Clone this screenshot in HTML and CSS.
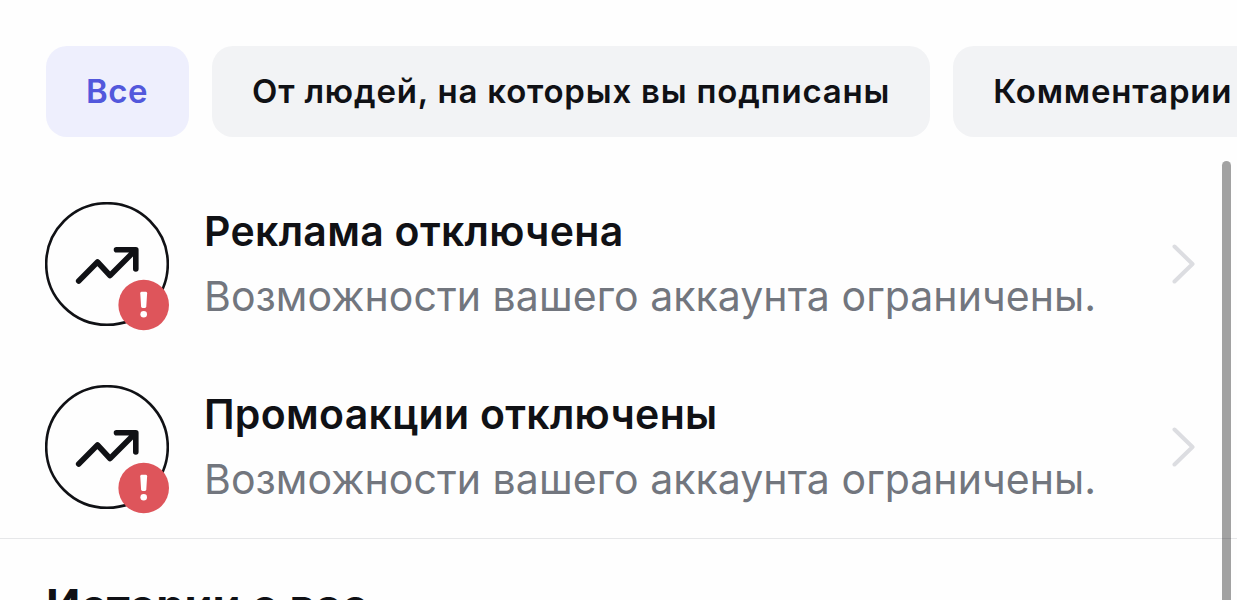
FILE: index.html
```html
<!DOCTYPE html>
<html lang="ru">
<head>
    <meta charset="UTF-8">
    <meta name="viewport" content="width=device-width, initial-scale=1.0">
    <title>Уведомления</title>
    <link rel="stylesheet" href="styles.css">
</head>
<body>
    <nav class="filters">
        <button class="chip active">Все</button>
        <button class="chip">От людей, на которых вы подписаны</button>
        <button class="chip">Комментарии</button>
    </nav>

    <main>
        <div class="alerts">
            <div class="alert">
                <svg class="alert-icon" viewBox="0 0 124 130">
                    <circle class="ring" cx="62" cy="62" r="60.8"/>
                    <path class="trend" d="M33.7 79 52.5 60 65 73.5 90.5 48M71.5 47.8H90.8V67"/>
                    <circle class="badge" cx="98.7" cy="103" r="25.3"/>
                    <path class="mark" d="M95.3 91.2Q95.3 89.8 96.7 89.8H100.7Q102.1 89.8 102.1 91.2L101.3 104.6Q101.2 106 99.9 106H97.5Q96.2 106 96.1 104.6Z"/>
                    <circle class="mark" cx="98.7" cy="112.3" r="3.3"/>
                </svg>
                <div class="alert-text">
                    <h3>Реклама отключена</h3>
                    <p>Возможности вашего аккаунта ограничены.</p>
                </div>
                <svg class="chevron" viewBox="0 0 24 42">
                    <path d="M3.5 3.5 21.5 21 3.5 38.5"/>
                </svg>
            </div>

            <div class="alert">
                <svg class="alert-icon" viewBox="0 0 124 130">
                    <circle class="ring" cx="62" cy="62" r="60.8"/>
                    <path class="trend" d="M33.7 79 52.5 60 65 73.5 90.5 48M71.5 47.8H90.8V67"/>
                    <circle class="badge" cx="98.7" cy="103" r="25.3"/>
                    <path class="mark" d="M95.3 91.2Q95.3 89.8 96.7 89.8H100.7Q102.1 89.8 102.1 91.2L101.3 104.6Q101.2 106 99.9 106H97.5Q96.2 106 96.1 104.6Z"/>
                    <circle class="mark" cx="98.7" cy="112.3" r="3.3"/>
                </svg>
                <div class="alert-text">
                    <h3>Промоакции отключены</h3>
                    <p>Возможности вашего аккаунта ограничены.</p>
                </div>
                <svg class="chevron" viewBox="0 0 24 42">
                    <path d="M3.5 3.5 21.5 21 3.5 38.5"/>
                </svg>
            </div>
        </div>

        <h2>Истории о вас</h2>
    </main>

    <div class="scrollbar"></div>
</body>
</html>
```

FILE: styles.css
```css
* {
    box-sizing: border-box;
}

body {
    margin: 0;
    height: 600px;
    overflow: hidden;
    background-color: #fefefe;
    color: #101115;
    font-family: Inter, "Liberation Sans", sans-serif;
}

.filters {
    display: flex;
    gap: 23px;
    padding: 46px 0 0 46px;
}

.chip {
    flex: none;
    height: 91px;
    padding: 0 40px 2px;
    border: none;
    border-radius: 21px;
    background-color: #f2f3f5;
    color: #101115;
    font-family: inherit;
    font-size: 33px;
    font-weight: 600;
    letter-spacing: 0.8px;
    white-space: nowrap;
}

.chip.active {
    padding-right: 41px;
    background-color: #eeeffd;
    color: #5258dc;
    letter-spacing: 0.5px;
}

.alerts {
    display: flex;
    flex-direction: column;
    gap: 53px;
    padding: 65px 42px 23px 45px;
    border-bottom: 1px solid #e6e7e9;
}

.alert {
    display: flex;
    align-items: flex-start;
    height: 130px;
}

.alert-icon {
    flex: none;
    width: 124px;
    height: 130px;
}

.ring {
    fill: none;
    stroke: #101115;
    stroke-width: 2.6;
}

.trend {
    fill: none;
    stroke: #101115;
    stroke-width: 5.6;
    stroke-linecap: round;
    stroke-linejoin: round;
}

.badge {
    fill: #de555b;
}

.mark {
    fill: #fff;
}

.alert-text {
    flex: 1;
    padding: 0 0 0 35px;
    white-space: nowrap;
}

.alert-text h3 {
    margin: 0;
    font-size: 41px;
    font-weight: 600;
    letter-spacing: 0.3px;
    line-height: 58px;
}

.alert-text p {
    margin: 6px 0 0;
    color: #72767e;
    font-size: 41px;
    letter-spacing: 0.06px;
    line-height: 60px;
}

.chevron {
    flex: none;
    width: 24px;
    height: 42px;
    margin-top: 41px;
}

.chevron path {
    fill: none;
    stroke: #dcdde1;
    stroke-width: 4;
    stroke-linecap: round;
    stroke-linejoin: round;
}

h2 {
    margin: 0;
    padding: 37px 0 0 46px;
    font-size: 45px;
    font-weight: 700;
    line-height: 60px;
    white-space: nowrap;
}

/* overlay scrollbar thumb */
.scrollbar {
    position: absolute;
    top: 161px;
    right: 6px;
    bottom: -10px;
    width: 9px;
    border-radius: 5px;
    background-color: rgba(0, 0, 0, 0.36);
}
```
